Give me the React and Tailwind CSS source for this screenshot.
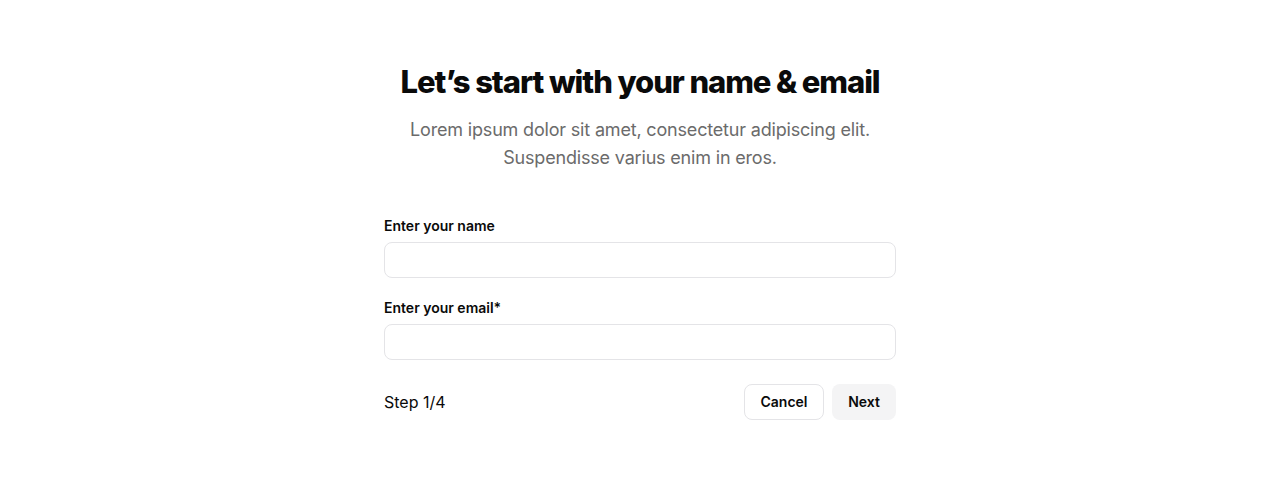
import React from 'react'

function Field({ label }) {
    return (
        <div className='flex flex-col w-full'>
            <label className='text-sm font-semibold leading-5 text-[#0a0a0a] mb-1.5'>{label}</label>
            <input className='w-full h-9 rounded-lg border border-[#e4e4e7] bg-white px-3 text-sm outline-none' />
        </div>
    )
}

export default function App() {
    return (
        <div className='flex flex-col w-full min-h-[484px] items-center bg-white pt-[62px]' style={{ fontFamily: 'Inter, "Liberation Sans", sans-serif' }}>
            <div className='flex flex-col w-[512px]'>
                <div className='flex flex-col items-center text-center'>
                    <h1 className='text-[31px] leading-10 font-extrabold tracking-[-0.035em] text-[#0a0a0a]'>
                        Let’s start with your name & email
                    </h1>
                    <p className='mt-[14px] text-lg leading-7 text-[#6b6b6b] tracking-[-0.01em]'>
                        Lorem ipsum dolor sit amet, consectetur adipiscing elit.<br />
                        Suspendisse varius enim in eros.
                    </p>
                </div>
                <div className='flex flex-col w-full mt-11 gap-5'>
                    <Field label='Enter your name' />
                    <Field label='Enter your email*' />
                </div>
                <div className='flex w-full items-center justify-between mt-6'>
                    <span className='text-base text-[#0a0a0a]'>Step 1/4</span>
                    <div className='flex gap-2'>
                        <button className='h-9 w-20 rounded-lg border border-[#e4e4e7] bg-white text-sm font-semibold text-[#0a0a0a]'>Cancel</button>
                        <button className='h-9 w-16 rounded-lg bg-[#f4f4f5] text-sm font-semibold text-[#0a0a0a]'>Next</button>
                    </div>
                </div>
            </div>
        </div>
    )
}
